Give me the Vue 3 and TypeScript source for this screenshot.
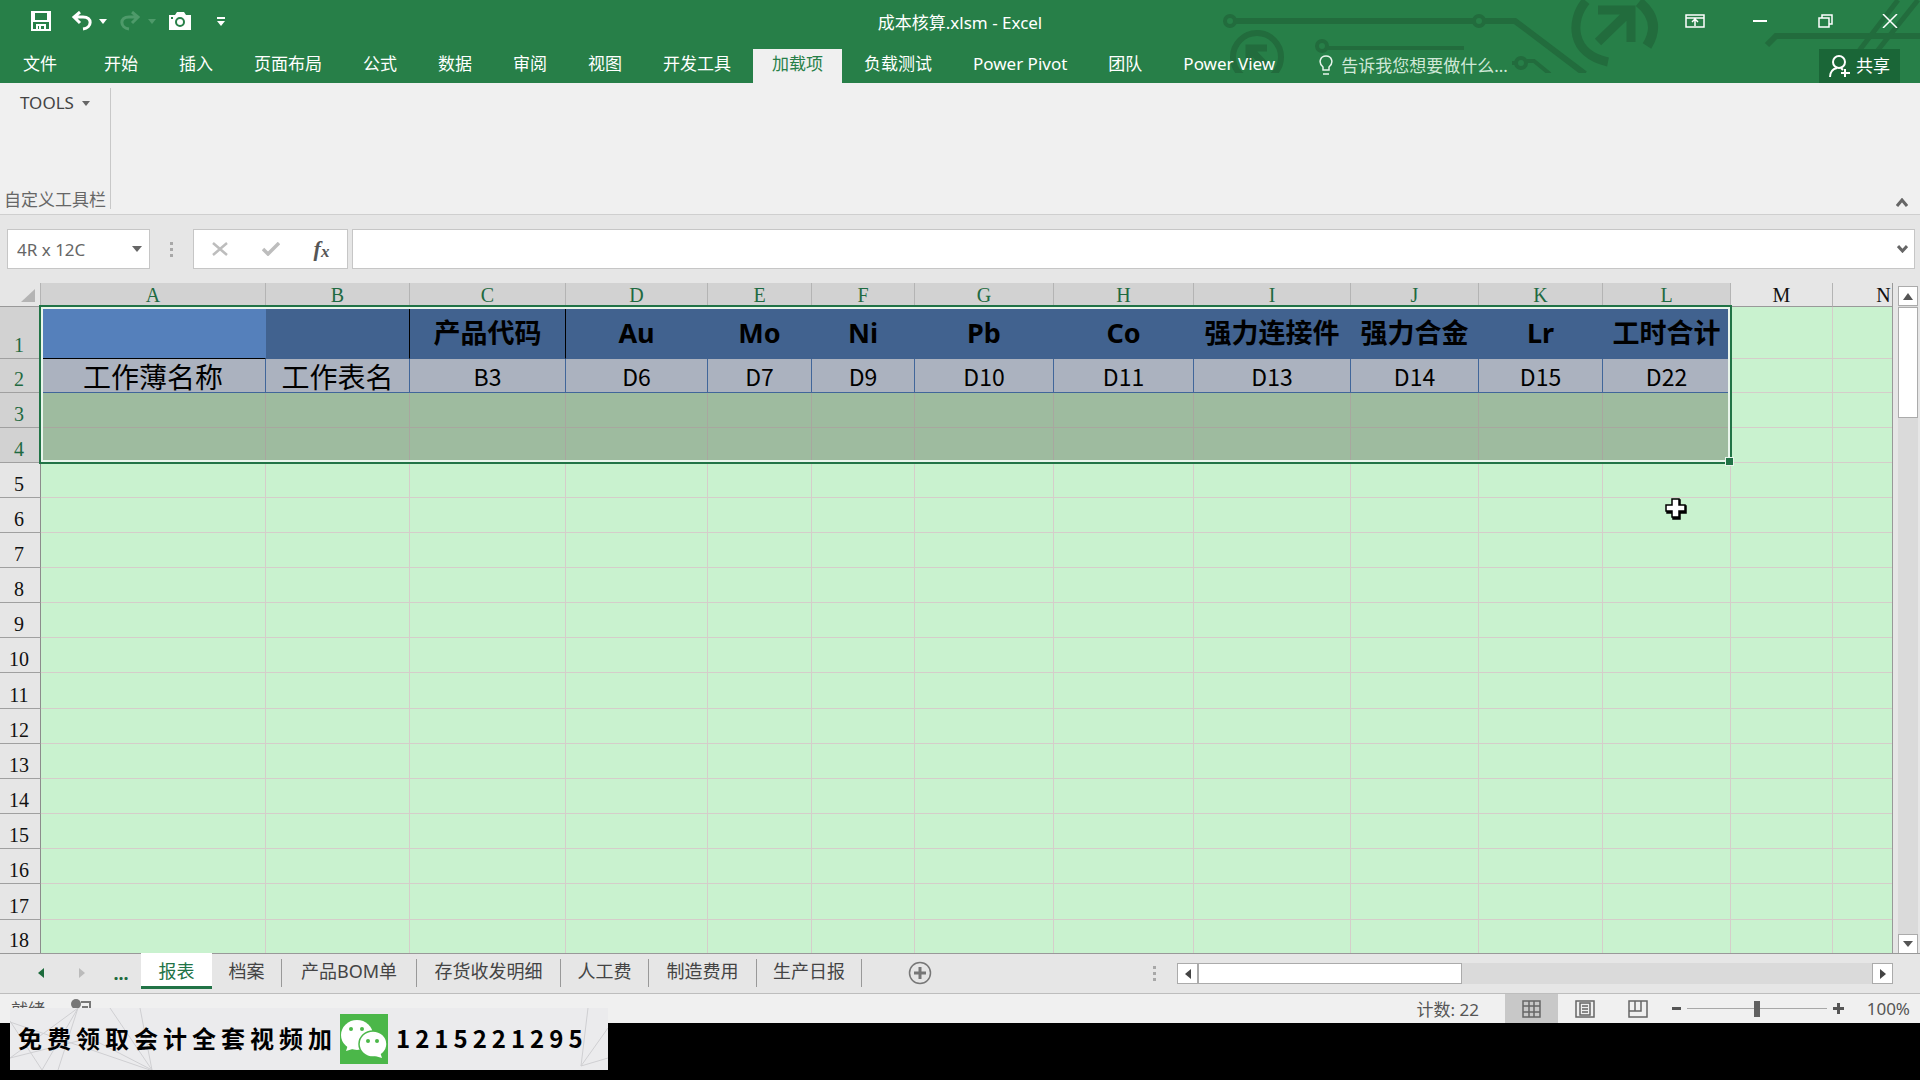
<script setup lang="ts">
import { computed, ref } from 'vue'

interface Column {
  name: string
  width: number
  title: string
  source: string
}

interface SheetTab {
  label: string
  width: number
}

const ribbonTabs: string[] = [
  '开始', '插入', '页面布局', '公式', '数据', '审阅', '视图',
  '开发工具', '加载项', '负载测试', 'Power Pivot', '团队', 'Power View',
]
const activeRibbonTab = ref('加载项')

const columns: Column[] = [
  { name: 'A', width: 225, title: '', source: '工作薄名称' },
  { name: 'B', width: 144, title: '', source: '工作表名' },
  { name: 'C', width: 156, title: '产品代码', source: 'B3' },
  { name: 'D', width: 142, title: 'Au', source: 'D6' },
  { name: 'E', width: 104, title: 'Mo', source: 'D7' },
  { name: 'F', width: 103, title: 'Ni', source: 'D9' },
  { name: 'G', width: 139, title: 'Pb', source: 'D10' },
  { name: 'H', width: 140, title: 'Co', source: 'D11' },
  { name: 'I', width: 157, title: '强力连接件', source: 'D13' },
  { name: 'J', width: 128, title: '强力合金', source: 'D14' },
  { name: 'K', width: 124, title: 'Lr', source: 'D15' },
  { name: 'L', width: 128, title: '工时合计', source: 'D22' },
  { name: 'M', width: 102, title: '', source: '' },
  { name: 'N', width: 102, title: '', source: '' },
]

const rowHeights: number[] = [52, 34, 35, 35, 35, 35, 35, 35, 35, 35, 36, 35, 35, 35, 35, 35, 36, 34]
const headerHeight = 24
const rowHeaderWidth = 41
const selectedRows = 4
const selectedColumns = 12

const sum = (values: number[]): number => values.reduce((total, value) => total + value, 0)

const tableWidth = computed(() => rowHeaderWidth + sum(columns.map((c) => c.width)))
const selectionStyle = computed(() => ({
  left: `${rowHeaderWidth - 2}px`,
  top: `${headerHeight - 2}px`,
  width: `${sum(columns.slice(0, selectedColumns).map((c) => c.width)) + 3}px`,
  height: `${sum(rowHeights.slice(0, selectedRows)) + 3}px`,
}))

function cellText(row: number, column: Column): string {
  if (row === 1) return column.title
  if (row === 2) return column.source
  return ''
}

function cellClasses(row: number, index: number): Record<string, boolean> {
  const selected = row <= selectedRows && index < selectedColumns
  return {
    selected,
    'title-cell': selected && row === 1,
    'source-cell': selected && row === 2,
    'wide-text': selected && row === 2 && index < 2,
    'active-cell': row === 1 && index === 0,
    'ink-right': row === 1 && (index === 1 || index === 2),
  }
}

const sheetTabs: SheetTab[] = [
  { label: '报表', width: 71 },
  { label: '档案', width: 70 },
  { label: '产品BOM单', width: 135 },
  { label: '存货收发明细', width: 144 },
  { label: '人工费', width: 88 },
  { label: '制造费用', width: 108 },
  { label: '生产日报', width: 105 },
]
const activeSheet = ref('报表')
const nameBox = ref('4R x 12C')
const formula = ref('')
const zoom = ref(50)
</script>

<template>
  <div class="app">
    <header class="top">
      <svg class="circuit" viewBox="0 0 720 73" width="720" height="73" fill="none" stroke="#226c3d" aria-hidden="true">
        <circle cx="30" cy="21" r="5" stroke-width="4" />
        <circle cx="279" cy="21" r="5" stroke-width="4" />
        <path d="M36 21H273M285 21H315L385 74" stroke-width="6" />
        <circle cx="57" cy="57" r="24" stroke-width="6" />
        <path d="M49 68V48H67M49 48L68 68" stroke-width="7" />
        <circle cx="122" cy="46" r="5" stroke-width="4" />
        <path d="M128 48H264" stroke-width="4" />
        <circle cx="321" cy="63" r="5" stroke-width="4" />
        <path d="M312 63H316M327 61H334L350 74" stroke-width="4" />
        <path d="M386 1C370 20 370 54 408 62" stroke-width="9" />
        <path d="M439 2C455 15 457 30 447 46" stroke-width="10" />
        <path d="M398 10H431V42M429 12L398 42" stroke-width="9" />
        <path d="M567 45L576 36H720" stroke-width="6" />
        <path d="M652 60L698 0M670 60L718 0" stroke-width="5" />
      </svg>

      <div class="title-row">
        <div class="quick-access">
          <button class="icon-btn save" aria-label="保存">
            <svg width="20" height="20" viewBox="0 0 20 20" fill="none" stroke="#fff" stroke-width="2">
              <path d="M1 1H19V19H1ZM3 1V10H17V1M6 19V14H14V19" /><path d="M9 15V19" stroke-width="2" />
            </svg>
          </button>
          <div class="split">
            <button class="icon-btn" aria-label="撤消">
              <svg width="21" height="20" viewBox="0 0 21 20" fill="none" stroke="#fff" stroke-width="3">
                <path d="M9 1L3 6L9 12M3 6H12C22 6 21 17 12 18" />
              </svg>
            </button>
            <button class="icon-btn" aria-label="撤消列表"><svg width="8" height="5"><path d="M0 0H8L4 5Z" fill="#fff" /></svg></button>
          </div>
          <div class="split">
            <button class="icon-btn" aria-label="恢复">
              <svg width="21" height="20" viewBox="0 0 21 20" fill="none" stroke="#4e9a6a" stroke-width="3">
                <path d="M12 1L18 6L12 12M18 6H9C-1 6 0 17 9 18" />
              </svg>
            </button>
            <button class="icon-btn" aria-label="恢复列表"><svg width="8" height="5"><path d="M0 0H8L4 5Z" fill="#4e9a6a" /></svg></button>
          </div>
          <button class="icon-btn" aria-label="照相机">
            <svg width="22" height="18" viewBox="0 0 22 18">
              <path d="M0 3H6L8 0H15L17 3H22V18H0Z" fill="#fff" />
              <circle cx="11" cy="10" r="4" fill="none" stroke="#277f48" stroke-width="2" />
              <path d="M2 5H4V7H2Z" fill="#277f48" />
            </svg>
          </button>
          <button class="icon-btn customize" aria-label="自定义快速访问工具栏">
            <svg width="8" height="9"><path d="M0 0H8V2H0ZM0 4H8L4 9Z" fill="#fff" /></svg>
          </button>
        </div>
        <h1 class="title">成本核算.xlsm - Excel</h1>
        <div class="window-controls">
          <button aria-label="功能区显示选项">
            <svg width="20" height="14" viewBox="0 0 20 14" fill="none" stroke="#fff"><path d="M1 1H19V13H1ZM1 4H19M10 12V6M7 8L10 5L13 8" stroke-width="1.5" /></svg>
          </button>
          <button aria-label="最小化"><svg width="14" height="2"><path d="M0 0H14V2H0Z" fill="#fff" /></svg></button>
          <button aria-label="还原">
            <svg width="15" height="14" viewBox="0 0 15 14" fill="none" stroke="#fff" stroke-width="1.5"><path d="M1 4H11V13H1ZM4 4V1H14V10H11" /></svg>
          </button>
          <button aria-label="关闭">
            <svg width="16" height="14" viewBox="0 0 16 14" fill="none" stroke="#fff" stroke-width="1.5"><path d="M1 0L15 14M15 0L1 14" /></svg>
          </button>
        </div>
      </div>

      <nav class="ribbon-tabs">
        <button class="ribbon-tab file">文件</button>
        <button
          v-for="tab in ribbonTabs"
          :key="tab"
          class="ribbon-tab"
          :class="{ active: tab === activeRibbonTab }"
          @click="activeRibbonTab = tab"
        >{{ tab }}</button>
        <label class="tell-me">
          <svg width="14" height="20" viewBox="0 0 14 20" fill="none" stroke="#e8f5ec" stroke-width="1.5">
            <path d="M4 15V12C-1 8 1 1 7 1S15 8 10 12V15ZM4 19H10" />
          </svg>
          <input type="text" placeholder="告诉我您想要做什么..." aria-label="告诉我您想要做什么" />
        </label>
        <button class="share">
          <svg width="21" height="23" viewBox="0 0 21 23" fill="none" stroke="#fff" stroke-width="2">
            <circle cx="10" cy="7" r="6" /><path d="M1 22C1 17 4 14 8 13M12 13L14 15M16 14V22M12 18H21" />
          </svg>
          共享
        </button>
      </nav>
    </header>

    <section class="ribbon">
      <div class="ribbon-group">
        <button class="tools">TOOLS <svg width="8" height="5"><path d="M0 0H8L4 5Z" fill="#666" /></svg></button>
        <span class="group-label">自定义工具栏</span>
      </div>
      <button class="collapse" aria-label="折叠功能区">
        <svg width="12" height="9" viewBox="0 0 12 9" fill="none" stroke="#666" stroke-width="3"><path d="M1 8L6 2L11 8" /></svg>
      </button>
    </section>

    <section class="formula-bar">
      <div class="name-box">
        <input v-model="nameBox" type="text" aria-label="名称框" />
        <button aria-label="名称列表"><svg width="10" height="6"><path d="M0 0H10L5 6Z" fill="#666" /></svg></button>
      </div>
      <svg class="grip" width="4" height="15"><path d="M0 0H3V3H0ZM0 6H3V9H0ZM0 12H3V15H0Z" fill="#a8a8a8" /></svg>
      <div class="fx-box">
        <button aria-label="取消"><svg width="16" height="14" viewBox="0 0 16 14" fill="none" stroke="#bdbdbd" stroke-width="2.5"><path d="M1 1L15 13M15 1L1 13" /></svg></button>
        <button aria-label="输入"><svg width="18" height="14" viewBox="0 0 18 14" fill="none" stroke="#bdbdbd" stroke-width="3.5"><path d="M1 7L6 12L17 1" /></svg></button>
        <button class="fx" aria-label="插入函数"><i>f</i><i class="sub">x</i></button>
      </div>
      <div class="formula-input">
        <input v-model="formula" type="text" aria-label="编辑栏" />
        <button aria-label="展开编辑栏"><svg width="11" height="8" viewBox="0 0 11 8" fill="none" stroke="#666" stroke-width="3"><path d="M1 1L5.5 6L10 1" /></svg></button>
      </div>
    </section>

    <main class="workbook">
      <div class="grid-view">
        <table :style="{ width: tableWidth + 'px' }">
          <colgroup>
            <col :style="{ width: rowHeaderWidth + 'px' }" />
            <col v-for="column in columns" :key="column.name" :style="{ width: column.width + 'px' }" />
          </colgroup>
          <thead>
            <tr>
              <th class="corner"><svg width="14" height="13"><path d="M14 0V13H0Z" fill="#b4b4b4" /></svg></th>
              <th
                v-for="(column, index) in columns"
                :key="column.name"
                scope="col"
                :class="{ picked: index < selectedColumns }"
              >{{ column.name }}</th>
            </tr>
          </thead>
          <tbody>
            <tr v-for="(height, r) in rowHeights" :key="r" :style="{ height: height + 'px' }">
              <th scope="row" :class="{ picked: r < selectedRows }">{{ r + 1 }}</th>
              <td v-for="(column, c) in columns" :key="column.name" :class="cellClasses(r + 1, c)">{{ cellText(r + 1, column) }}</td>
            </tr>
          </tbody>
        </table>
        <div class="selection" :style="selectionStyle"><span class="fill-handle"></span></div>
        <svg class="pointer" width="24" height="24" viewBox="0 0 24 24">
          <path d="M9 3H16V9H22V16H16V22H9V16H3V9H9Z" fill="#000" stroke="#000" stroke-width="1.5" />
          <path d="M8 2H15V8H21V14H15V20H8V14H2V8H8Z" fill="#fff" stroke="#000" stroke-width="1.5" />
        </svg>
      </div>
      <div class="v-scroll">
        <button aria-label="向上滚动"><svg width="10" height="7"><path d="M0 7L5 0L10 7Z" fill="#555" /></svg></button>
        <div class="v-thumb"></div>
        <button class="end" aria-label="向下滚动"><svg width="10" height="6"><path d="M0 0H10L5 6Z" fill="#555" /></svg></button>
      </div>
    </main>

    <section class="sheet-bar">
      <div class="sheet-nav">
        <button aria-label="上一张"><svg width="6" height="10"><path d="M6 0V10L0 5Z" fill="#1c6b3c" /></svg></button>
        <button aria-label="下一张"><svg width="6" height="10"><path d="M0 0V10L6 5Z" fill="#bbb" /></svg></button>
        <button class="more">...</button>
      </div>
      <button
        v-for="sheet in sheetTabs"
        :key="sheet.label"
        class="sheet-tab"
        :class="{ active: sheet.label === activeSheet }"
        :style="{ width: sheet.width + 'px' }"
        @click="activeSheet = sheet.label"
      ><span>{{ sheet.label }}</span></button>
      <button class="add-sheet" aria-label="新工作表">
        <svg width="24" height="24" viewBox="0 0 24 24" fill="none" stroke="#777"><circle cx="12" cy="12" r="10.5" stroke-width="1.5" /><path d="M12 6V18M6 12H18" stroke-width="3" /></svg>
      </button>
      <svg class="grip tab-grip" width="4" height="15"><path d="M0 0H3V3H0ZM0 6H3V9H0ZM0 12H3V15H0Z" fill="#a8a8a8" /></svg>
      <div class="h-scroll">
        <button aria-label="向左滚动"><svg width="6" height="10"><path d="M6 0V10L0 5Z" fill="#444" /></svg></button>
        <div class="h-thumb"></div>
        <button class="end" aria-label="向右滚动"><svg width="6" height="10"><path d="M0 0V10L6 5Z" fill="#444" /></svg></button>
      </div>
    </section>

    <footer class="status-bar">
      <span class="ready">就绪</span>
      <svg class="macro" width="20" height="20" viewBox="0 0 20 20"><circle cx="5" cy="5" r="5" fill="#777" /><path d="M10 3H19V17H3V11M11 8H16V14" fill="none" stroke="#777" stroke-width="2" /></svg>
      <span class="count">计数: 22</span>
      <div class="views">
        <button class="on" aria-label="普通"><svg width="19" height="18" viewBox="0 0 19 18" fill="none" stroke="#666" stroke-width="1.5"><path d="M1 1H18V17H1ZM1 6H18M1 12H18M7 1V17M12 1V17" /></svg></button>
        <button aria-label="页面布局"><svg width="20" height="18" viewBox="0 0 20 18" fill="none" stroke="#666" stroke-width="1.5"><path d="M1 1H19V17H1ZM5 3H15V15H5ZM7 6H13M7 9H13M7 12H13" /></svg></button>
        <button aria-label="分页预览"><svg width="20" height="18" viewBox="0 0 20 18" fill="none" stroke="#666" stroke-width="1.5"><path d="M1 1H19V17H1ZM7 1V11M1 11H13V1" /></svg></button>
      </div>
      <div class="zoom">
        <button aria-label="缩小"><svg width="9" height="3"><path d="M0 0H9V3H0Z" fill="#555" /></svg></button>
        <input v-model="zoom" type="range" min="0" max="100" aria-label="缩放" />
        <button aria-label="放大"><svg width="11" height="11"><path d="M4 0H7V4H11V7H7V11H4V7H0V4H4Z" fill="#555" /></svg></button>
      </div>
      <span class="percent">100%</span>
    </footer>

    <aside class="banner">
      <svg class="web" viewBox="0 0 598 62" width="598" height="62" fill="none" stroke="#cfcfd2" aria-hidden="true">
        <path d="M0 13L32 62M0 14L140 62M0 50L68 0L32 62M48 62L68 0M100 0L142 62L130 0M142 62L80 30L0 50" />
        <path d="M578 0L571 58L598 20M571 58L598 50" />
      </svg>
      <strong>免费领取会计全套视频加</strong>
      <svg class="wechat" width="48" height="50" viewBox="0 0 48 50">
        <path d="M0 0H48V50H0Z" fill="#4bb749" />
        <ellipse cx="17" cy="21" rx="16" ry="15" fill="#fff" /><path d="M8 31L6 37L16 34Z" fill="#fff" />
        <ellipse cx="33" cy="30" rx="14" ry="13" fill="#fff" stroke="#4bb749" stroke-width="1.5" /><path d="M35 42L42 44L40 38Z" fill="#fff" />
        <g fill="#4bb749"><circle cx="11" cy="15" r="2" /><circle cx="22" cy="15" r="2" /><circle cx="28" cy="27" r="2" /><circle cx="37" cy="27" r="2" /></g>
      </svg>
      <strong class="number">1215221295</strong>
    </aside>
  </div>
</template>

<style>
body {
  margin: 0;
  background: #000;
}
</style>

<style scoped>
.app {
  position: relative;
  min-height: 100vh;
  overflow: hidden;
  background: #000;
  font-family: "Noto Sans", "Noto Sans CJK SC", sans-serif;
  font-size: 17px;
  color: #444;
}

button,
input {
  margin: 0;
  padding: 0;
  border: 0;
  background: none;
  color: inherit;
  font: inherit;
  outline: none;
}

button {
  display: flex;
  align-items: center;
  justify-content: center;
  white-space: nowrap;
}

svg {
  display: block;
  flex: none;
}

/* Title bar and ribbon tabs */
.top {
  position: relative;
  background: #277f48;
  color: #fff;
}

.circuit {
  position: absolute;
  top: 0;
  right: 0;
}

.title-row {
  position: relative;
  display: grid;
  grid-template-columns: 1fr auto 1fr;
  height: 49px;
}

.quick-access {
  display: flex;
  align-items: center;
  gap: 13px;
  height: 42px;
  padding-left: 31px;
}

.save {
  margin-right: 7px;
}

.split {
  display: flex;
  align-items: center;
  gap: 7px;
}

.customize {
  margin-left: 13px;
}

.title {
  margin: 0;
  font-size: 17px;
  font-weight: 400;
  line-height: 46px;
}

.window-controls {
  display: flex;
  justify-content: flex-end;
  gap: 5px;
  height: 42px;
}

.window-controls button {
  width: 60px;
}

.ribbon-tabs {
  position: relative;
  display: flex;
  gap: 3px;
  height: 34px;
  padding-left: 4px;
}

.ribbon-tab {
  align-items: flex-start;
  height: 34px;
  padding: 0 19px;
  line-height: 30px;
}

.ribbon-tab.file {
  margin-right: 6px;
}

.ribbon-tab.active {
  background: #f0f0f0;
  color: #277f48;
}

.tell-me {
  display: flex;
  align-items: center;
  gap: 8px;
  width: 200px;
  height: 32px;
  margin-left: 22px;
}

.tell-me input {
  flex: 1;
  min-width: 0;
}

.tell-me input::placeholder {
  color: #cfe8d7;
  opacity: 1;
}

.share {
  gap: 6px;
  width: 81px;
  height: 34px;
  margin-right: 20px;
  margin-left: auto;
  background: #1a6637;
  line-height: 30px;
}

/* Ribbon */
.ribbon {
  display: flex;
  justify-content: space-between;
  height: 131px;
  border-bottom: 1px solid #cfcfcf;
  background: #f0f0f0;
}

.ribbon-group {
  display: flex;
  flex-direction: column;
  justify-content: space-between;
  align-items: flex-start;
  margin: 5px 0;
  padding: 0 4px;
  border-right: 1px solid #c8c8c8;
}

.tools {
  gap: 8px;
  padding-left: 16px;
  line-height: 30px;
}

.group-label {
  line-height: 18px;
  color: #666;
}

.collapse {
  align-self: flex-end;
  width: 36px;
  height: 24px;
}

/* Formula bar */
.formula-bar {
  display: flex;
  align-items: center;
  height: 68px;
  padding: 0 5px 0 7px;
  background: #e6e6e6;
}

.name-box,
.fx-box,
.formula-input {
  display: flex;
  box-sizing: border-box;
  height: 40px;
  border: 1px solid #c6c6c6;
  background: #fff;
}

.name-box {
  width: 143px;
  padding-left: 9px;
}

.name-box input {
  flex: 1;
  min-width: 0;
  color: #666;
}

.name-box button,
.formula-input button {
  width: 24px;
}

.grip {
  margin: 0 19px 0 20px;
}

.fx-box {
  justify-content: space-around;
  width: 155px;
  margin-right: 4px;
}

.fx-box button {
  width: 44px;
}

.fx {
  color: #555;
  font-family: "Liberation Serif", serif;
  font-size: 22px;
  font-weight: 700;
}

.sub {
  padding-top: 6px;
  font-size: 17px;
}

.formula-input {
  flex: 1;
}

.formula-input input {
  flex: 1;
  padding-left: 8px;
}

/* Worksheet */
.workbook {
  display: flex;
  background: #e6e6e6;
}

.grid-view {
  position: relative;
  flex: 1;
  min-width: 0;
  overflow: hidden;
  border-right: 1px solid #999;
}

table {
  table-layout: fixed;
  border-spacing: 0;
}

th,
td {
  box-sizing: border-box;
  padding: 0;
  text-align: center;
  white-space: nowrap;
}

thead tr {
  height: 24px;
}

th {
  font-family: "Liberation Serif", "Noto Sans CJK SC", serif;
  font-size: 20px;
  font-weight: 400;
  color: #111;
  background: #e6e6e6;
}

thead th {
  height: 24px;
  padding-top: 1px;
  border-right: 1px solid #b4b4b4;
  border-bottom: 1px solid #999;
  line-height: 22px;
}

thead th.picked,
tbody th.picked {
  background: #d2d2d2;
  color: #1f6a41;
}

.corner svg {
  margin-left: 21px;
}

tbody th {
  padding-right: 2px;
  border-right: 1px solid #8c8c8c;
  border-bottom: 1px solid #a0a0a0;
  line-height: 26px;
  vertical-align: bottom;
}

td {
  border-right: 1px solid #d5cdca;
  border-bottom: 1px solid #d5cdca;
  background: #c9f2cf;
  color: #000;
}

td.selected {
  border-color: #a8a79f;
  background: #9ebb9f;
}

td.title-cell {
  border-right-color: #41628f;
  border-bottom-color: #41628f;
  background: #41628f;
  font-size: 27px;
  font-weight: 700;
  line-height: 50px;
}

td.active-cell {
  border-right-color: #5580bb;
  border-bottom-color: #000;
  background: #5580bb;
}

td.ink-right {
  border-right-color: #000;
}

td.source-cell {
  border-color: #41669a;
  background: #abb2bf;
  font-family: "Noto Sans CJK SC", sans-serif;
  font-size: 23px;
  line-height: 32px;
}

td.wide-text {
  font-size: 28px;
}

.selection {
  position: absolute;
  box-sizing: border-box;
  border: 2px solid #217346;
  box-shadow: inset 0 0 0 2px #e9f5ec;
}

.fill-handle {
  position: absolute;
  right: -4px;
  bottom: -4px;
  width: 7px;
  height: 7px;
  border: 1px solid #e9f5ec;
  background: #217346;
}

.pointer {
  position: absolute;
  top: 214px;
  left: 1664px;
}

.v-scroll {
  display: flex;
  flex-direction: column;
  width: 20px;
  margin: 3px 2px 0 5px;
  background: #dadada;
}

.v-scroll button,
.v-thumb,
.h-scroll button,
.h-thumb {
  box-sizing: border-box;
  border: 1px solid #ababab;
  background: #fff;
}

.v-scroll button {
  height: 20px;
}

.v-thumb {
  height: 111px;
  margin-top: 1px;
}

.v-scroll .end {
  margin-top: auto;
}

/* Sheet tabs */
.sheet-bar {
  position: relative;
  display: flex;
  box-sizing: border-box;
  height: 41px;
  margin-top: -1px;
  border-top: 1px solid #999;
  border-bottom: 1px solid #bdbdbd;
  background: #e6e6e6;
  font-size: 18px;
}

.sheet-nav {
  display: flex;
  width: 141px;
  height: 38px;
}

.sheet-nav button {
  width: 41px;
}

.sheet-nav button:first-child {
  margin-left: 20px;
}

.sheet-nav .more {
  width: 38px;
  font-weight: 700;
  color: #1c6b3c;
}

.sheet-tab {
  align-items: flex-start;
  box-sizing: border-box;
  height: 36px;
  padding-top: 5px;
}

.sheet-tab span {
  flex: 1;
  height: 28px;
  border-right: 1px solid #999;
  line-height: 24px;
}

.sheet-tab.active {
  margin-top: -1px;
  border-bottom: 3px solid #217346;
  background: #fff;
  color: #217346;
}

.sheet-tab.active span {
  border-right: 0;
  line-height: 26px;
}

.add-sheet {
  width: 24px;
  height: 38px;
  margin-left: 46px;
}

.tab-grip {
  margin-top: 12px;
  margin-left: auto;
}

.h-scroll {
  display: flex;
  width: 716px;
  height: 21px;
  margin: 9px 27px 0 1px;
  background: #dadada;
}

.h-scroll button {
  width: 21px;
}

.h-thumb {
  width: 264px;
}

.h-scroll .end {
  margin-left: auto;
}

/* Status bar */
.status-bar {
  display: flex;
  align-items: center;
  height: 29px;
  padding-right: 10px;
  background: #f0f0f0;
  color: #555;
}

.ready {
  margin-left: 11px;
}

.macro {
  margin-left: 26px;
}

.count {
  margin-left: auto;
}

.views {
  display: flex;
  height: 29px;
  margin-left: 26px;
}

.views button {
  width: 53px;
}

.views .on {
  background: #c8c8c8;
}

.zoom {
  display: flex;
  align-items: center;
  gap: 6px;
  margin-left: 8px;
}

.zoom input {
  width: 140px;
  height: 16px;
  appearance: none;
  background: linear-gradient(#a8a8a8, #a8a8a8) center / 100% 1px no-repeat;
}

.zoom input::-webkit-slider-thumb {
  width: 6px;
  height: 16px;
  appearance: none;
  background: #606060;
}

.percent {
  width: 46px;
  margin-left: 20px;
  text-align: right;
}

/* Promotion strip over the lower left corner */
.banner {
  position: absolute;
  top: 1008px;
  left: 10px;
  display: flex;
  align-items: center;
  width: 598px;
  height: 62px;
  background: #ebebed;
  color: #000;
  font-family: "Noto Sans CJK SC", sans-serif;
  font-size: 24px;
  line-height: 32px;
}

.web {
  position: absolute;
  top: 0;
  left: 0;
}

.banner strong {
  position: relative;
  margin-left: 8px;
  padding-bottom: 2px;
  letter-spacing: 5px;
  white-space: nowrap;
}

.wechat {
  position: relative;
  margin-left: 3px;
}
</style>
